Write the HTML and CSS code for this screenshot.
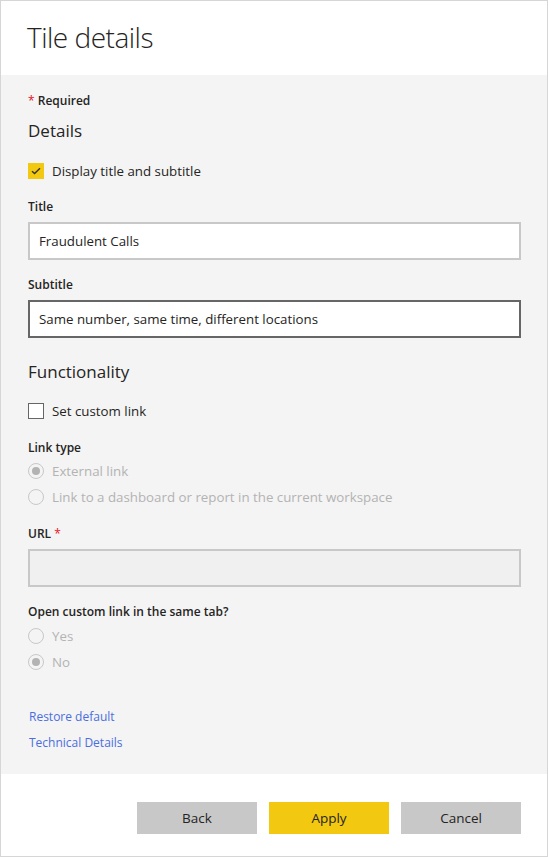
FILE: index.html
```html
<!DOCTYPE html>
<html lang="en">
<head>
<meta charset="utf-8">
<title>Tile details</title>
<link rel="stylesheet" href="styles.css">
</head>
<body>
<div class="dialog">
  <header class="header">
    <h1 class="title">Tile details</h1>
  </header>
  <main class="content">
    <div class="required"><span class="star">*</span> Required</div>
    <h2 class="section first">Details</h2>
    <div class="check-row mt-checkrow">
      <span class="checkbox checked">
        <svg width="10" height="8" viewBox="0 0 10 8"><path d="M1 4.2 L3.6 6.6 L9 1.2" fill="none" stroke="#333" stroke-width="1.4"/></svg>
      </span>
      <span class="check-label">Display title and subtitle</span>
    </div>
    <div class="label mt-label">Title</div>
    <div class="input">Fraudulent Calls</div>
    <div class="label mt-label2">Subtitle</div>
    <div class="input focused">Same number, same time, different locations</div>

    <h2 class="section second">Functionality</h2>
    <div class="check-row mt-checkrow2">
      <span class="checkbox"></span>
      <span class="check-label">Set custom link</span>
    </div>
    <div class="label mt-label3">Link type</div>
    <div class="radio-group">
      <div class="radio-row"><span class="radio on"></span><span class="radio-label">External link</span></div>
      <div class="radio-row"><span class="radio"></span><span class="radio-label">Link to a dashboard or report in the current workspace</span></div>
    </div>
    <div class="label mt-label3">URL <span class="star">*</span></div>
    <div class="input disabled"></div>
    <div class="label mt-label2">Open custom link in the same tab?</div>
    <div class="radio-group tight">
      <div class="radio-row"><span class="radio"></span><span class="radio-label">Yes</span></div>
      <div class="radio-row"><span class="radio on"></span><span class="radio-label">No</span></div>
    </div>
    <div class="links">
      <a class="link" href="#">Restore default</a>
      <a class="link" href="#">Technical Details</a>
    </div>
  </main>
  <footer class="footer">
    <button class="btn">Back</button>
    <button class="btn primary">Apply</button>
    <button class="btn">Cancel</button>
  </footer>
</div>
</body>
</html>
```

FILE: styles.css
```css
html, body {
  margin: 0;
  padding: 0;
  background: #ffffff;
}

body {
  font-family: "Open Sans", "Noto Sans", "Liberation Sans", sans-serif;
  color: #252423;
}

.dialog {
  width: 548px;
  height: 857px;
  box-sizing: border-box;
  border: 1px solid #d6d6d6;
  display: flex;
  flex-direction: column;
  background: #ffffff;
}

.header {
  height: 74px;
  padding-left: 26px;
  box-sizing: border-box;
  display: flex;
  align-items: flex-start;
}

.title {
  margin: 17px 0 0 0;
  font-size: 28px;
  line-height: 38px;
  font-weight: 300;
  color: #252423;
  letter-spacing: -0.5px;
}

.content {
  flex: 1;
  background: #f4f4f4;
  padding: 17px 26px 22px 27px;
  display: flex;
  flex-direction: column;
  align-items: stretch;
}

.required {
  padding-top: 1px;
  font-size: 12px;
  line-height: 16px;
  font-weight: 600;
  color: #252423;
}

.star {
  color: #e81123;
  font-weight: 400;
}

.section {
  margin: 0;
  font-size: 17px;
  line-height: 24px;
  font-weight: 400;
  color: #252423;
}

.section.first { margin-top: 10px; }
.section.second { margin-top: 22px; }

.check-row {
  display: flex;
  align-items: center;
  gap: 8px;
  height: 20px;
}

.mt-checkrow { margin-top: 18px; }
.mt-checkrow2 { margin-top: 17px; }

.checkbox {
  width: 16px;
  height: 16px;
  box-sizing: border-box;
  border: 1px solid #666666;
  background: #ffffff;
  display: flex;
  align-items: center;
  justify-content: center;
  flex: none;
}

.checkbox.checked {
  background: #f2c811;
  border-color: #f2c811;
}

.check-label {
  font-size: 13.3px;
  line-height: 20px;
  color: #252423;
}

.label {
  font-size: 12px;
  line-height: 16px;
  font-weight: 600;
  color: #252423;
}

.mt-label { margin-top: 18px; }
.mt-label2 { margin-top: 17px; }
.mt-label3 { margin-top: 19px; }

.input {
  margin-top: 7px;
  height: 38px;
  box-sizing: border-box;
  border: 2px solid #c8c8c8;
  background: #ffffff;
  padding: 0 9px;
  display: flex;
  align-items: center;
  font-size: 13.3px;
  color: #252423;
}

.input.focused {
  border-color: #666666;
}

.input.disabled {
  background: #f0f0f0;
}

.radio-group {
  margin-top: 5px;
  display: flex;
  flex-direction: column;
  gap: 6px;
}

.radio-group.tight {
  margin-top: 6px;
}

.radio-row {
  display: flex;
  align-items: center;
  gap: 8px;
  height: 20px;
}

.radio {
  width: 16px;
  height: 16px;
  box-sizing: border-box;
  border: 1px solid #c8c8c8;
  border-radius: 50%;
  display: flex;
  align-items: center;
  justify-content: center;
  flex: none;
}

.radio.on::after {
  content: "";
  width: 8px;
  height: 8px;
  border-radius: 50%;
  background: #b3b3b3;
}

.radio-label {
  font-size: 13.3px;
  line-height: 20px;
  color: #b3b3b3;
}

.links {
  margin-top: 37px;
  display: flex;
  flex-direction: column;
  align-items: flex-start;
  gap: 10px;
}

.link {
  font-size: 12px;
  line-height: 16px;
  color: #4a6ee0;
  text-decoration: none;
  margin-left: 1px;
}

.footer {
  height: 82px;
  box-sizing: border-box;
  padding: 28px 26px 0 0;
  display: flex;
  justify-content: flex-end;
  align-items: flex-start;
  gap: 12px;
}

.btn {
  width: 120px;
  height: 32px;
  border: none;
  background: #c8c8c8;
  font-family: "Open Sans", "Noto Sans", "Liberation Sans", sans-serif;
  font-size: 13.5px;
  color: #252423;
  padding: 0;
  cursor: pointer;
}

.btn.primary {
  background: #f2c811;
}
```
